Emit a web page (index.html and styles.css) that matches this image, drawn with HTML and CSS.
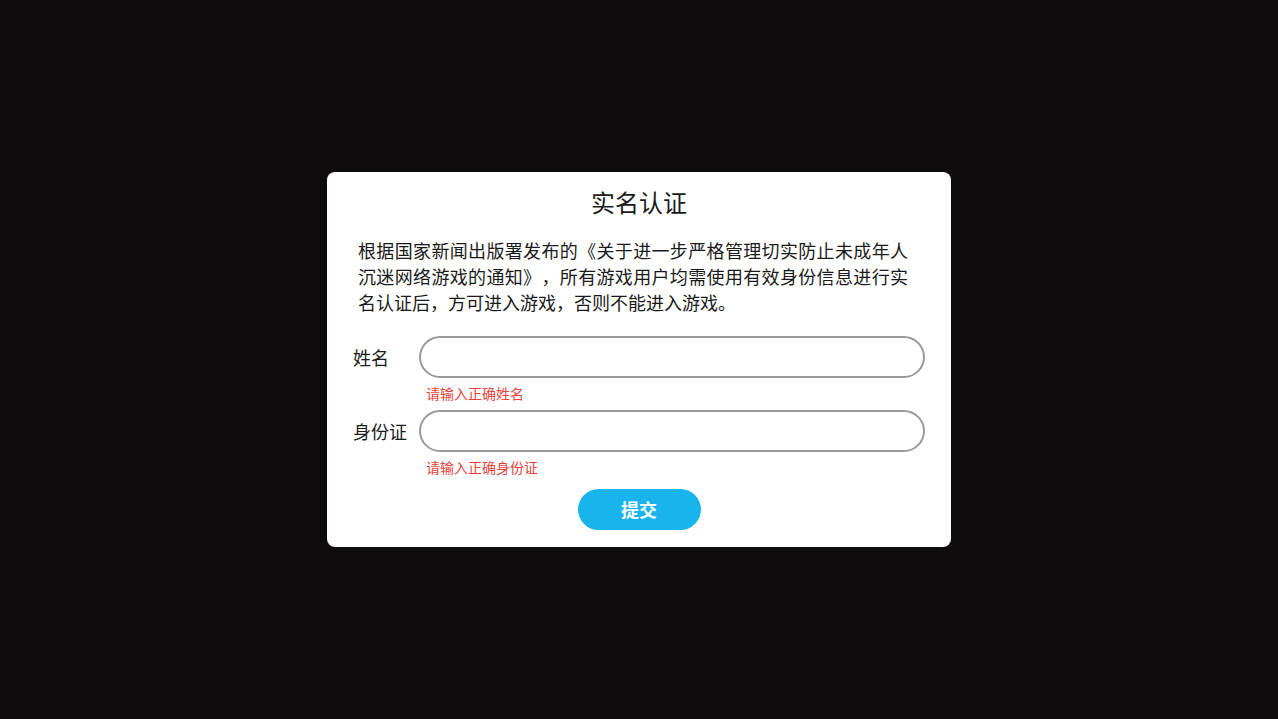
FILE: index.html
```html
<!DOCTYPE html>
<html lang="zh-CN">
<head>
<meta charset="utf-8">
<title>实名认证</title>
<link rel="stylesheet" href="styles.css">
</head>
<body>
<div class="stage">
  <div class="dialog">
    <h1 class="title">实名认证</h1>
    <p class="notice">根据国家新闻出版署发布的《关于进一步严格管理切实防止未成年人沉迷网络游戏的通知》，所有游戏用户均需使用有效身份信息进行实名认证后，方可进入游戏，否则不能进入游戏。</p>
    <div class="field">
      <label class="label" for="name">姓名</label>
      <input class="input" id="name" type="text">
    </div>
    <div class="error">请输入正确姓名</div>
    <div class="field field-second">
      <label class="label" for="idcard">身份证</label>
      <input class="input" id="idcard" type="text">
    </div>
    <div class="error">请输入正确身份证</div>
    <div class="actions">
      <button class="submit" type="button">提交</button>
    </div>
  </div>
</div>
</body>
</html>
```

FILE: styles.css
```css
html, body {
  margin: 0;
  padding: 0;
  height: 100%;
}
body {
  background: #0d0b0c;
  font-family: "Noto Sans CJK SC", "Noto Sans", sans-serif;
  color: #1a1a1a;
  text-spacing-trim: space-all;
}
.stage {
  height: 718px;
  display: flex;
  align-items: center;
  justify-content: center;
}
.dialog {
  width: 624px;
  box-sizing: border-box;
  background: #fff;
  border-radius: 8px;
  padding: 14px 26px 17px 26px;
}
.title {
  margin: 0;
  font-size: 24px;
  line-height: 32px;
  font-weight: normal;
  text-align: center;
}
.notice {
  margin: 19px 0 0 5px;
  width: 550px;
  font-size: 18px;
  line-height: 26px;
  text-align: justify;
  text-spacing-trim: space-all;
}
.field {
  display: flex;
  align-items: center;
  margin-top: 21px;
}
.field-second {
  margin-top: 7px;
}
.label {
  width: 66px;
  flex: none;
  font-size: 18px;
  line-height: 26px;
}
.input {
  flex: 1;
  height: 42px;
  box-sizing: border-box;
  border: 2px solid #9a9a9a;
  border-radius: 21px;
  outline: none;
  padding: 0 18px;
  font-family: inherit;
  font-size: 18px;
  background: #fff;
}
.error {
  margin: 5px 0 0 73px;
  font-size: 14px;
  line-height: 20px;
  color: #e8433a;
}
.actions {
  display: flex;
  justify-content: center;
  margin-top: 12px;
}
.submit {
  width: 123px;
  height: 41px;
  border: none;
  border-radius: 21px;
  background: #19b4ec;
  color: #fff;
  font-family: inherit;
  font-size: 18px;
  font-weight: bold;
  padding: 0;
}
```
